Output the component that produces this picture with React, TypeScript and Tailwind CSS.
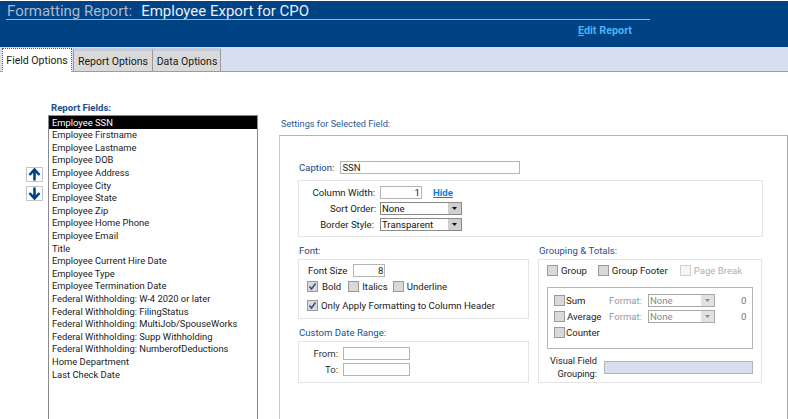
const fields = [
  "Employee Firstname",
  "Employee Lastname",
  "Employee DOB",
  "Employee Address",
  "Employee City",
  "Employee State",
  "Employee Zip",
  "Employee Home Phone",
  "Employee Email",
  "Title",
  "Employee Current Hire Date",
  "Employee Type",
  "Employee Termination Date",
  "Federal Withholding: W-4 2020 or later",
  "Federal Withholding: FilingStatus",
  "Federal Withholding: MultiJob/SpouseWorks",
  "Federal Withholding: Supp Withholding",
  "Federal Withholding: NumberofDeductions",
  "Home Department",
  "Last Check Date",
];

function Check({ checked, disabled }: { checked?: boolean; disabled?: boolean }) {
  return (
    <span
      className={
        "flex h-[11px] w-[11px] shrink-0 items-center justify-center border " +
        (disabled ? "border-[#d0d0d0] bg-[#f6f6f6]" : "border-[#9a9a9a] bg-[#d9d9d9]")
      }
    >
      {checked && (
        <svg width="9" height="9" viewBox="0 0 9 9" fill="none">
          <path d="M1.5 4.5 L3.5 7 L7.5 1.5" stroke="#2b4a80" strokeWidth="1.4" />
        </svg>
      )}
    </span>
  );
}

function Select({ value, width, disabled }: { value: string; width: string; disabled?: boolean }) {
  return (
    <div
      className={
        "flex h-[13px] items-center justify-between border pl-px " +
        width +
        (disabled ? " border-[#a9a9a9] text-[#8a8a8a]" : " border-[#8a8a8a] text-[#111]")
      }
    >
      <span>{value}</span>
      <span
        className={
          "flex h-[11px] w-[13px] items-center justify-center " +
          (disabled ? "bg-[#e2e2e2]" : "bg-[#cfcfcf]")
        }
      >
        <svg width="5" height="3" viewBox="0 0 5 3">
          <path d="M0 0h5L2.5 3z" fill={disabled ? "#8a8a8a" : "#111"} />
        </svg>
      </span>
    </div>
  );
}

function ArrowButton({ down }: { down?: boolean }) {
  return (
    <button className="flex h-[15px] w-[17px] items-center justify-center border border-[#c4c4c4] bg-white">
      <svg width="13" height="13" viewBox="0 0 13 13" fill="none" className={down ? "rotate-180" : ""}>
        <path d="M6.5 12.5V2.5M1.5 7L6.5 1.5L11.5 7" stroke="#004385" strokeWidth="2.6" />
      </svg>
    </button>
  );
}

export default function App() {
  return (
    <div className="flex h-[419px] w-[788px] flex-col overflow-hidden bg-white font-['Roboto',sans-serif] text-[9.6px] leading-[13px] text-[#1a1a1a]">
      <div className="h-[47px] shrink-0 border-t border-white bg-[#004385] pl-[6px] pt-[3px]">
        <div className="flex h-[16px] w-[644px] items-end border-b border-[#9fb0c8] pl-px text-[15px] leading-[15px]">
          <span className="text-[#a9b9cf]">Formatting Report:</span>
          <span className="ml-[9px] text-[#e8eef6]">Employee Export for CPO</span>
        </div>
        <div className="mt-[4px] w-[626px] text-right text-[10.8px] font-bold leading-[14px] text-[#48b4f4]">
          <span className="underline">E</span>dit Report
        </div>
      </div>

      <div className="flex h-[25px] shrink-0 items-end border-b border-[#9a9ca6] bg-[#d6dff0] pl-[2px] text-[10.5px]">
        <div className="z-10 -mb-px flex h-[24px] w-[70px] items-center justify-center border border-dotted border-[#555] border-b-white bg-white">
          Field Options
        </div>
        <div className="ml-px flex h-[23px] w-[80px] items-center justify-center border-x border-[#9a9a9a] border-t-[3px] border-t-[#c3cbdc] bg-[#d9d9d9] pt-px">
          Report Options
        </div>
        <div className="flex h-[23px] w-[68px] items-center justify-center border-r border-[#9a9a9a] border-t-[3px] border-t-[#c3cbdc] bg-[#d9d9d9] pl-px pt-px">
          Data Options
        </div>
      </div>

      <div className="flex min-h-0 flex-1">
        <div className="mt-[95px] ml-[26px] flex w-[22px] shrink-0 flex-col gap-[4px]">
          <ArrowButton />
          <ArrowButton down />
        </div>

        <div className="flex w-[210px] shrink-0 flex-col pt-[29px]">
          <div className="h-[14px] pl-[3px] text-[9.6px] font-bold leading-[13px] text-[#1d4f8c]">Report Fields:</div>
          <div className="flex-1 border-x border-t border-[#8a8a8a] text-[9.4px]">
            <div className="flex h-[13px] items-center bg-black pb-px pl-[3px] text-white">Employee SSN</div>
            {fields.map((f) => (
              <div key={f} className="flex h-[12.6px] items-center pb-px pl-[3px]">
                {f}
              </div>
            ))}
          </div>
        </div>

        <div className="ml-[21px] flex min-w-0 flex-1 flex-col pt-[45px]">
          <div className="h-[18px] pl-[2px] text-[9.2px] text-[#2a5a94]">Settings for Selected Field:</div>
          <div className="flex-1 border-t border-l border-r border-t-[#b4b4b4] border-l-[#c8c8c8] border-r-[#a8a8a8] pl-[18px] pr-[24px] pt-[24px]">
            <div className="flex h-[15px] items-center gap-[6px] pl-px">
              <span className="text-[#1d3f78]">Caption:</span>
              <span className="flex h-[13px] w-[180px] items-center border border-[#b5b5b5] pl-px">SSN</span>
            </div>

            <div className="mt-[5px] h-[57px] border border-[#e4e4e4] pt-[3px]">
              <div className="flex h-[17px] items-center">
                <span className="w-[76px] text-right">Column Width:</span>
                <span className="ml-[5px] flex h-[13px] w-[42px] items-center justify-end border border-[#b5b5b5] pr-px">1</span>
                <span className="ml-[11px] font-bold text-[#0a7fe0] underline">Hide</span>
              </div>
              <div className="flex h-[15px] items-center">
                <span className="w-[77px] text-right">Sort Order:</span>
                <Select value="None" width="ml-[4px] w-[82px]" />
              </div>
              <div className="flex h-[16px] items-center">
                <span className="w-[75px] text-right">Border Style:</span>
                <Select value="Transparent" width="ml-[6px] w-[82px]" />
              </div>
            </div>

            <div className="mt-[5px] grid grid-cols-[231px_224px] gap-x-[9px]">
              <div className="flex flex-col">
                <div className="h-[17px] pl-px pt-[2px] text-[#1d3f78]">Font:</div>
                <div className="h-[60px] border border-[#e4e4e4] pl-[8px] pt-[3px]">
                  <div className="flex h-[14px] items-center gap-[6px] pl-px">
                    <span>Font Size</span>
                    <span className="flex h-[13px] w-[32px] items-center justify-end border border-[#b5b5b5] pr-px">8</span>
                  </div>
                  <div className="mt-[2px] flex h-[15px] items-center">
                    <Check checked />
                    <span className="ml-[4px]">Bold</span>
                    <span className="ml-[7px]"><Check /></span>
                    <span className="ml-[3px]">Italics</span>
                    <span className="ml-[5px]"><Check /></span>
                    <span className="ml-[3px]">Underline</span>
                  </div>
                  <div className="mt-[4px] flex h-[15px] items-center gap-[3px]">
                    <Check checked />
                    <span>Only Apply Formatting to Column Header</span>
                  </div>
                </div>
                <div className="mt-[4px] h-[18px] pl-px pt-[3px] text-[#1d4f8c]">Custom Date Range:</div>
                <div className="h-[42px] border border-[#e4e4e4] pt-[3px]">
                  <div className="flex h-[16px] items-center">
                    <span className="w-[39px] text-right text-[#333]">From:</span>
                    <span className="ml-[5px] h-[13px] w-[67px] border border-[#b5b5b5]" />
                  </div>
                  <div className="flex h-[16px] items-center">
                    <span className="w-[39px] text-right text-[#333]">To:</span>
                    <span className="ml-[5px] h-[13px] w-[67px] border border-[#b5b5b5]" />
                  </div>
                </div>
              </div>

              <div className="flex flex-col">
                <div className="h-[17px] pl-px pt-[2px] text-[#1d4f8c]">Grouping &amp; Totals:</div>
                <div className="h-[124px] border border-[#e4e4e4] px-[8px] pt-[4px]">
                  <div className="flex h-[13px] items-center whitespace-nowrap">
                    <Check />
                    <span className="ml-[3px]">Group</span>
                    <span className="ml-[11px]"><Check /></span>
                    <span className="ml-[3px]">Group Footer</span>
                    <span className="ml-[12px]"><Check disabled /></span>
                    <span className="ml-[3px] text-[#b0b0b0]">Page Break</span>
                  </div>
                  <div className="mt-[10px] h-[62px] w-[206px] border border-[#b5b5b5] pl-[6px] pt-[4px]">
                    <div className="flex h-[16px] items-center">
                      <Check />
                      <span className="w-[44px] pl-px">Sum</span>
                      <span className="w-[39px] text-[#9a9a9a]">Format:</span>
                      <Select value="None" width="w-[67px]" disabled />
                      <span className="ml-[26px] text-[#777]">0</span>
                    </div>
                    <div className="flex h-[16px] items-center">
                      <Check />
                      <span className="w-[44px] pl-[2px]">Average</span>
                      <span className="w-[39px] text-[#9a9a9a]">Format:</span>
                      <Select value="None" width="w-[67px]" disabled />
                      <span className="ml-[26px] text-[#777]">0</span>
                    </div>
                    <div className="flex h-[16px] items-center">
                      <Check />
                      <span className="pl-px">Counter</span>
                    </div>
                  </div>
                  <div className="mt-[5px] flex items-center">
                    <span className="w-[50px] whitespace-nowrap text-right text-[9.2px] leading-[13px]">
                      Visual Field
                      <br />
                      Grouping:
                    </span>
                    <span className="ml-[7px] h-[13px] w-[149px] border border-[#b5b5b5] bg-[#d6dff0]" />
                  </div>
                </div>
              </div>
            </div>
          </div>
        </div>
      </div>
    </div>
  );
}
